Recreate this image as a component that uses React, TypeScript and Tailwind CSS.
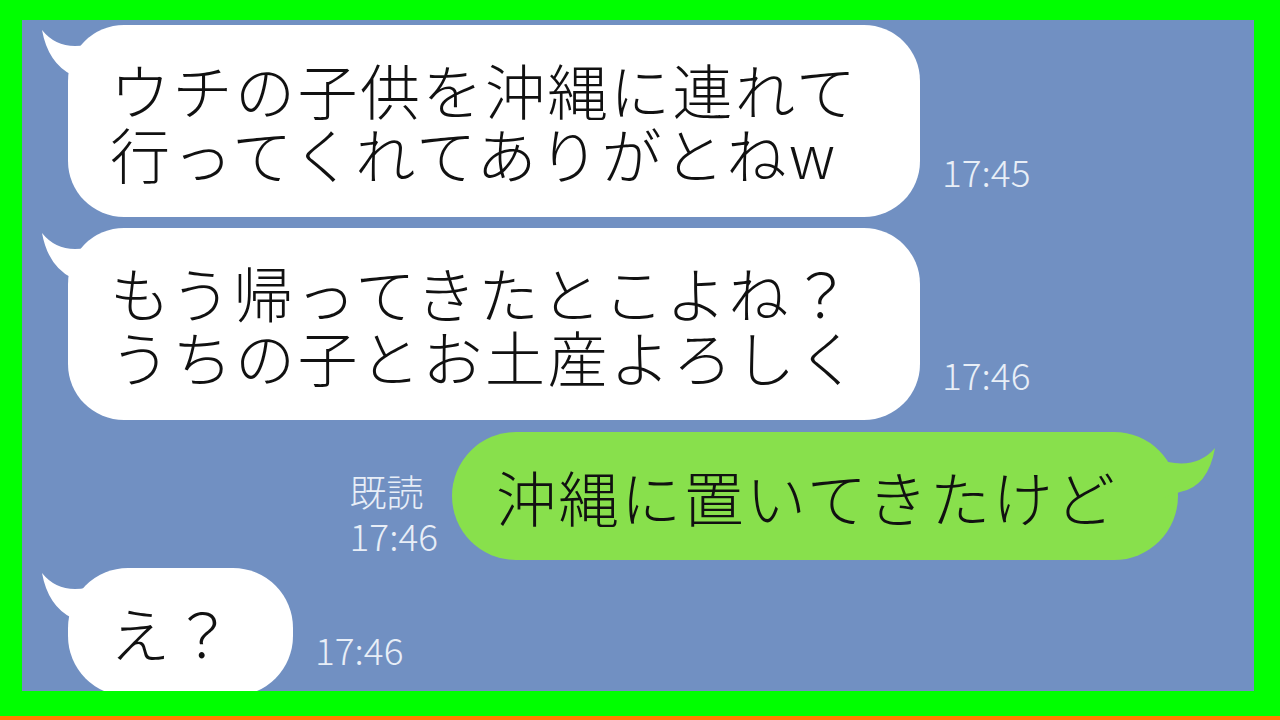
const jp = "font-['Noto_Sans_CJK_JP','Noto_Sans',sans-serif]";

function LeftTail() {
  return (
    <svg
      className="absolute left-[-30px] top-0"
      width="70"
      height="64"
      viewBox="0 0 70 64"
    >
      <path d="M4 5 Q24 30 62 16 L62 62 L34 50 Q10 38 4 5 Z" fill="#ffffff" />
    </svg>
  );
}

function RightTail() {
  return (
    <svg
      className="absolute right-[-45px] top-0"
      width="60"
      height="70"
      viewBox="0 0 60 70"
    >
      <path d="M52 16 Q35 36 5 30 L0 30 L0 66 L17 60 Q45 55 52 16 Z" fill="#88e04c" />
    </svg>
  );
}

function Time({ children, className }: { children: React.ReactNode; className?: string }) {
  return (
    <span className={`${jp} block text-[37px] font-light leading-none text-[#e8eef7] ${className ?? ""}`}>
      {children}
    </span>
  );
}

function Lines({ lines }: { lines: string[] }) {
  return (
    <div className="relative flex flex-col">
      {lines.map((l) => (
        <span
          key={l}
          className={`${jp} block h-[64px] text-[60px] font-light leading-[64px] tracking-[2.5px] text-[#111] whitespace-nowrap`}
        >
          {l}
        </span>
      ))}
    </div>
  );
}

export default function App() {
  return (
    <div className="w-[1280px] h-[720px] flex flex-col bg-[#ff7f00]">
      <div className="h-[716px] bg-[#00ff00] pt-[20px] pl-[22px] pr-[26px] pb-[25px]">
        <div className="h-full bg-[#7190c2] overflow-hidden pt-[5px] flex flex-col">
          {/* incoming 1 */}
          <div className="flex items-end gap-[22px] pl-[46px]">
            <div className="relative w-[852px] h-[192px] bg-white rounded-[56px] flex items-center pl-[42px]">
              <LeftTail />
              <Lines lines={["ウチの子供を沖縄に連れて", "行ってくれてありがとねw"]} />
            </div>
            <Time className="pb-[27px]">17:45</Time>
          </div>

          {/* incoming 2 */}
          <div className="flex items-end gap-[22px] pl-[46px] mt-[11px]">
            <div className="relative w-[852px] h-[192px] bg-white rounded-[56px] flex items-center pl-[42px]">
              <LeftTail />
              <Lines lines={["もう帰ってきたとこよね？", "うちの子とお土産よろしく"]} />
            </div>
            <Time className="pb-[27px]">17:46</Time>
          </div>

          {/* outgoing */}
          <div className="flex items-end justify-end gap-[14px] pr-[76px] mt-[12px]">
            <div className="flex flex-col gap-[7px] pb-[6px]">
              <Time>既読</Time>
              <Time>17:46</Time>
            </div>
            <div className="relative w-[726px] h-[128px] bg-[#88e04c] rounded-full flex items-center pl-[44px]">
              <RightTail />
              <Lines lines={["沖縄に置いてきたけど"]} />
            </div>
          </div>

          {/* incoming 3 */}
          <div className="flex items-end gap-[22px] pl-[46px] mt-[8px]">
            <div className="relative w-[225px] h-[128px] shrink-0 bg-white rounded-[60px] flex items-center pl-[42px]">
              <LeftTail />
              <Lines lines={["え？"]} />
            </div>
            <Time className="pb-[28px]">17:46</Time>
          </div>
        </div>
      </div>
      <div className="h-[4px] bg-[#ff7f00]" />
    </div>
  );
}
